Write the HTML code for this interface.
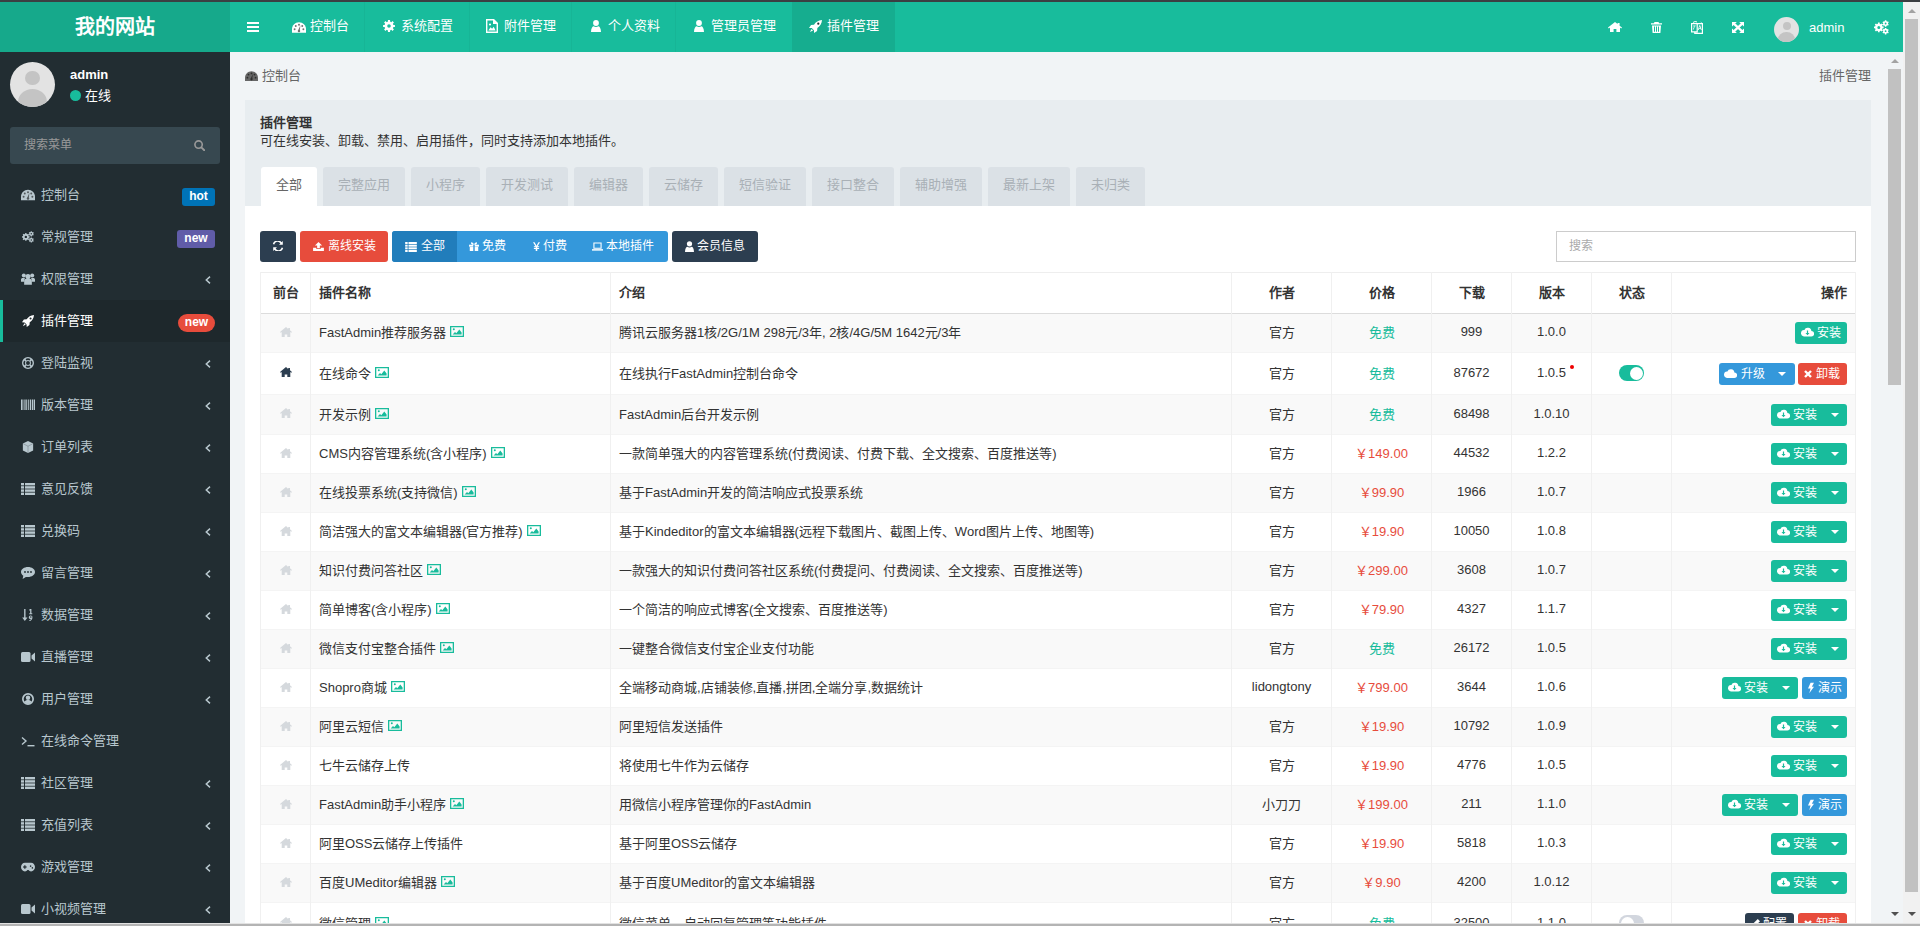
<!DOCTYPE html>
<html lang="zh-CN"><head><meta charset="utf-8">
<style>
*{box-sizing:border-box;margin:0;padding:0}
html,body{width:1920px;height:926px;overflow:hidden;background:#f1f4f6;font-family:"Liberation Sans",sans-serif;font-size:13px;color:#333}
.abs{position:absolute}
#topline{left:0;top:0;width:1920px;height:2px;background:#3b3f42}
#logo{left:0;top:2px;width:230px;height:50px;background:#16a98b;color:#fff;font-size:20px;font-weight:bold;text-align:center;line-height:50px}
#navbar{left:230px;top:2px;width:1673px;height:50px;background:#18bc9c}
#sidebar{left:0;top:52px;width:230px;height:871px;background:#222d32;overflow:hidden}
#content{left:230px;top:52px;width:1656px;height:871px;background:#f1f4f6;overflow:hidden}
#vs1{left:1886px;top:52px;width:17px;height:871px;background:#f1f4f6}
#vs2{left:1903px;top:2px;width:17px;height:921px;background:#f1f1f1}
#bot{left:0;top:923px;width:1920px;height:3px;background:#b4b4b4;border-top:1px solid #e2e2e2}
.thumb{position:absolute;background:#c1c1c1}
.arr-up{position:absolute;width:0;height:0;border-left:4px solid transparent;border-right:4px solid transparent;border-bottom:4px solid #a3a3a3}
.arr-dn{position:absolute;width:0;height:0;border-left:4px solid transparent;border-right:4px solid transparent;border-top:4px solid #505050}

.sb-user{position:absolute;left:0;top:0;width:230px;height:65px}
.avatar{position:absolute;border-radius:50%;background:#e3e3e3;overflow:hidden}
.avatar:before{content:"";position:absolute;left:34%;top:20%;width:32%;height:32%;border-radius:50%;background:#c4c4c4}
.avatar:after{content:"";position:absolute;left:17%;top:60%;width:66%;height:60%;border-radius:50%;background:#c4c4c4}
.sb-name{position:absolute;left:70px;top:15px;color:#fff;font-weight:bold;font-size:13px;line-height:16px}
.sb-stat{position:absolute;left:70px;top:37px;color:#fff;font-size:13px;line-height:13px}
.sb-dot{position:absolute;left:0;top:1px;width:11px;height:11px;border-radius:50%;background:#18bc9c}
.sb-search{position:absolute;left:10px;top:75px;width:210px;height:37px;border-radius:3px;background:#374850}
.sb-search span{position:absolute;left:14px;top:12px;font-size:12px;line-height:12px;color:#999}
.sb-search svg{position:absolute;left:184px;top:13px;width:11px;height:11px;color:#999}
.menu{position:absolute;left:0;top:122px;width:230px}
.mi{position:relative;height:42px;color:#b8c7ce}
.mi.act{background:#1e282c;color:#fff;border-left:3px solid #18bc9c}
.mi svg.ic{position:absolute;left:21px;top:15px;width:14px;height:12px}
.mi .tx{position:absolute;left:41px;top:14px;font-size:13px;line-height:14px}
.mi.act svg.ic{left:18px}
.mi.act .tx{left:38px}
.mi .chev{position:absolute;left:205px;top:18px;width:6px;height:8px}
.badge{position:absolute;left:182px;top:14px;height:18px;padding:0 6px;border-radius:3px;color:#fff;font-weight:bold;font-size:12px;line-height:16px;text-align:center}

.nv{position:absolute;color:#fff}
.nv-t{position:absolute;top:17px;font-size:13px;line-height:14px;color:#fff;white-space:nowrap}
.nv-i{position:absolute;color:#fff}
.nv-sep{position:absolute;top:0;width:1px;height:50px;background:rgba(0,0,0,.035)}

.ct{position:absolute;white-space:nowrap}
.panel{position:absolute;left:15px;top:48px;width:1626px;height:900px;background:#fff}
.ph{position:absolute;left:0;top:0;width:1626px;height:106px;background:#e8edf0}
.tab{position:absolute;top:67px;height:39px;border-radius:3px 3px 0 0;background:#dbe1e6;color:#a9b0b6;font-size:13px;line-height:36px;text-align:center}
.tab.on{background:#fff;color:#666}
.btn{position:absolute;height:31px;border-radius:3px;color:#fff;font-size:12px;line-height:31px;white-space:nowrap}
.btn svg{position:absolute}
.btn span{position:absolute;top:0}
.search{position:absolute;left:1311px;top:131px;width:300px;height:31px;border:1px solid #ccc;background:#fff}
.search span{position:absolute;left:12px;top:8px;font-size:12px;line-height:13px;color:#aaa}
.tbl{position:absolute;left:30px;top:220px;width:1595px;height:700px}
.hl{position:absolute;left:0;width:1595px;height:1px;background:#eee}
.vl{position:absolute;top:0;width:1px;height:700px;background:#f0f0f0}
.row{position:absolute;left:0;width:1595px}
.row.st{background:#f9f9f9}
.cell{position:absolute;top:0;height:100%;display:flex;align-items:center;padding-bottom:3px !important;white-space:nowrap;font-size:13px;color:#333}
.th{font-weight:bold}
.c{justify-content:center}
.r{justify-content:flex-end}
.free{color:#18bc9c}
.price{color:#e74c3c}
.ximg{width:14px;height:11px;color:#18bc9c;margin-left:4px;vertical-align:-1px}
.bx{position:absolute;height:22px;border-radius:3px;color:#fff;font-size:12px;line-height:22px;white-space:nowrap}
.bx svg{position:absolute}
.bx span{position:absolute;top:0}
</style></head><body>
<svg width="0" height="0" style="position:absolute">
<defs>
<symbol id="i-dash" viewBox="0 0 16 12"><path d="M8 0C3.6 0 0 3.6 0 8v4h16V8C16 3.6 12.4 0 8 0z" fill="currentColor"/><g fill="#000" opacity=".55"><circle cx="3" cy="8" r="1.1"/><circle cx="4.3" cy="4.3" r="1.1"/><circle cx="8" cy="2.8" r="1.1"/><circle cx="11.7" cy="4.3" r="1.1"/><circle cx="13" cy="8" r="1.1"/><path d="M9.6 3.5 8.9 9.3 7.1 9 z"/><circle cx="8" cy="10" r="1.4"/></g></symbol>
<symbol id="i-cog" viewBox="0 0 14 14"><path fill="currentColor" fill-rule="evenodd" d="M5.76 1.85 L5.77 0.11 L8.23 0.11 L8.24 1.85 L9.77 2.48 L11.00 1.26 L12.74 3.00 L11.52 4.23 L12.15 5.76 L13.89 5.77 L13.89 8.23 L12.15 8.24 L11.52 9.77 L12.74 11.00 L11.00 12.74 L9.77 11.52 L8.24 12.15 L8.23 13.89 L5.77 13.89 L5.76 12.15 L4.23 11.52 L3.00 12.74 L1.26 11.00 L2.48 9.77 L1.85 8.24 L0.11 8.23 L0.11 5.77 L1.85 5.76 L2.48 4.23 L1.26 3.00 L3.00 1.26 L4.23 2.48Z M9.10 7.00 A2.1 2.1 0 1 0 4.90 7.00 A2.1 2.1 0 1 0 9.10 7.00Z"/></symbol>
<symbol id="i-cogs" viewBox="0 0 15 15"><path fill="currentColor" fill-rule="evenodd" d="M3.91 3.70 L3.94 2.58 L5.66 2.58 L5.69 3.70 L6.79 4.16 L7.60 3.38 L8.82 4.60 L8.04 5.41 L8.50 6.51 L9.62 6.54 L9.62 8.26 L8.50 8.29 L8.04 9.39 L8.82 10.20 L7.60 11.42 L6.79 10.64 L5.69 11.10 L5.66 12.22 L3.94 12.22 L3.91 11.10 L2.81 10.64 L2.00 11.42 L0.78 10.20 L1.56 9.39 L1.10 8.29 L-0.02 8.26 L-0.02 6.54 L1.10 6.51 L1.56 5.41 L0.78 4.60 L2.00 3.38 L2.81 4.16Z M6.30 7.40 A1.5 1.5 0 1 0 3.30 7.40 A1.5 1.5 0 1 0 6.30 7.40Z M10.83 1.12 L10.88 0.28 L12.32 0.28 L12.37 1.12 L13.27 1.64 L14.03 1.27 L14.75 2.51 L14.05 2.98 L14.05 4.02 L14.75 4.49 L14.03 5.73 L13.27 5.36 L12.37 5.88 L12.32 6.72 L10.88 6.72 L10.83 5.88 L9.93 5.36 L9.17 5.73 L8.45 4.49 L9.15 4.02 L9.15 2.98 L8.45 2.51 L9.17 1.27 L9.93 1.64Z M12.50 3.50 A0.9 0.9 0 1 0 10.70 3.50 A0.9 0.9 0 1 0 12.50 3.50Z M10.83 8.82 L10.88 7.98 L12.32 7.98 L12.37 8.82 L13.27 9.34 L14.03 8.97 L14.75 10.21 L14.05 10.68 L14.05 11.72 L14.75 12.19 L14.03 13.43 L13.27 13.06 L12.37 13.58 L12.32 14.42 L10.88 14.42 L10.83 13.58 L9.93 13.06 L9.17 13.43 L8.45 12.19 L9.15 11.72 L9.15 10.68 L8.45 10.21 L9.17 8.97 L9.93 9.34Z M12.50 11.20 A0.9 0.9 0 1 0 10.70 11.20 A0.9 0.9 0 1 0 12.50 11.20Z"/></symbol>
<symbol id="i-users" viewBox="0 0 16 13"><g fill="currentColor"><circle cx="3.2" cy="2.6" r="2.3"/><circle cx="12.8" cy="2.6" r="2.3"/><path d="M0 9.5V7.2C0 6 .8 5.3 2 5.3h2.6c-.5.6-.8 1.4-.8 2.3v1.9z"/><path d="M16 9.5V7.2C16 6 15.2 5.3 14 5.3h-2.6c.5.6.8 1.4.8 2.3v1.9z"/><circle cx="8" cy="3.6" r="2.9"/><path d="M3.6 13V8.6c0-1.5 1-2.4 2.4-2.4h4c1.4 0 2.4.9 2.4 2.4V13z"/></g></symbol>
<symbol id="i-rocket" viewBox="0 0 14 14"><g fill="currentColor"><path d="M14 0C10 .2 7.4 2.2 5.4 5L2.2 5.3 0 8.5l3 .2 2.3 2.3.2 3 3.2-2.2.3-3.2C11.8 6.6 13.8 4 14 0z"/><path d="M2.8 9.6 1 13l3.4-1.8z"/></g><circle cx="10" cy="4" r="1.2" fill="#222d32"/></symbol>
<symbol id="i-life" viewBox="0 0 14 14"><path fill="currentColor" fill-rule="evenodd" d="M14 7A7 7 0 1 1 0 7A7 7 0 1 1 14 7Z M9.3 7A2.3 2.3 0 1 0 4.7 7A2.3 2.3 0 1 0 9.3 7Z M11.58 4.14A5.4 5.4 0 0 1 11.58 9.86L9.97 8.85A3.5 3.5 0 0 0 9.97 5.15ZM9.86 11.58A5.4 5.4 0 0 1 4.14 11.58L5.15 9.97A3.5 3.5 0 0 0 8.85 9.97ZM2.42 9.86A5.4 5.4 0 0 1 2.42 4.14L4.03 5.15A3.5 3.5 0 0 0 4.03 8.85ZM4.14 2.42A5.4 5.4 0 0 1 9.86 2.42L8.85 4.03A3.5 3.5 0 0 0 5.15 4.03Z"/></symbol>
<symbol id="i-barcode" viewBox="0 -0.5 14 12"><g fill="currentColor"><rect x="0" y="0" width="1.6" height="10.5"/><rect x="2.6" y="0" width="1" height="10.5"/><rect x="4.4" y="0" width="1.4" height="10.5"/><rect x="6.8" y="0" width="1" height="10.5"/><rect x="8.8" y="0" width="1.4" height="10.5"/><rect x="11" y="0" width="1" height="10.5"/><rect x="12.6" y="0" width="1.4" height="10.5"/></g></symbol>
<symbol id="i-cube" viewBox="0 0 14 14"><path fill="currentColor" d="M7 0 13 3v8l-6 3-6-3V3z"/><path d="M1.5 3.3 7 6l5.5-2.7M7 6v7.5" stroke="#222d32" stroke-width=".6" fill="none" opacity=".5"/></symbol>
<symbol id="i-list" viewBox="0 0 14 12"><g fill="currentColor"><rect x="0" y="0" width="3" height="2.4"/><rect x="4" y="0" width="10" height="2.4"/><rect x="0" y="3.2" width="3" height="2.4"/><rect x="4" y="3.2" width="10" height="2.4"/><rect x="0" y="6.4" width="3" height="2.4"/><rect x="4" y="6.4" width="10" height="2.4"/><rect x="0" y="9.6" width="3" height="2.4"/><rect x="4" y="9.6" width="10" height="2.4"/></g></symbol>
<symbol id="i-comment" viewBox="0 0 14 12"><path fill="currentColor" d="M7 0C3.1 0 0 2.2 0 5c0 1.5.9 2.8 2.3 3.7L1.6 12l3.3-2.1c.7.1 1.4.2 2.1.2 3.9 0 7-2.2 7-5S10.9 0 7 0z"/><g fill="#222d32"><circle cx="4" cy="5" r=".9"/><circle cx="7" cy="5" r=".9"/><circle cx="10" cy="5" r=".9"/></g></symbol>
<symbol id="i-sortnum" viewBox="0 0 14 14"><g fill="currentColor"><path d="M2.5 0h1.6v10h2.3L3.3 14 .2 10h2.3z"/><path d="M9.5 0h1.5v5H12v1H8.5V5h1V1.4L8.6 2 8.3 1z"/><path d="M10.3 7.5a1.9 1.9 0 0 1 1.9 2.1c0 2.3-1.4 4.2-3.6 4.4l-.2-1c1.1-.2 1.9-.8 2.2-1.7-.3.2-.6.3-1 .3a1.9 1.9 0 0 1 .7-4.1zm0 1a.9.9 0 1 0 0 1.8.9.9 0 1 0 0-1.8z" fill-rule="evenodd"/></g></symbol>
<symbol id="i-video" viewBox="0 0 14 10"><g fill="currentColor"><rect x="0" y="0" width="9.5" height="10" rx="1.5"/><path d="M10.5 3.5 14 .5v9l-3.5-3z"/></g></symbol>
<symbol id="i-usercirc" viewBox="0 0 14 14"><path fill="currentColor" fill-rule="evenodd" d="M14 7A7 7 0 1 1 0 7A7 7 0 1 1 14 7ZM12 7A5 5 0 1 0 2 7A5 5 0 1 0 12 7Z"/><circle cx="7" cy="5.5" r="2.6" fill="currentColor"/><path fill="currentColor" d="M2.8 10.6C3.6 8.9 5.1 8.2 7 8.2s3.4.7 4.2 2.4A5.2 5.2 0 0 1 2.8 10.6z"/></symbol>
<symbol id="i-term" viewBox="0 0 14 12"><path d="M1 2.5 5 6l-4 3.5" stroke="currentColor" stroke-width="1.4" fill="none"/><rect x="6.5" y="10" width="7" height="1.4" fill="currentColor"/></symbol>
<symbol id="i-gamepad" viewBox="0 0 16 10"><path fill="currentColor" d="M4.5 0h7C14 0 16 2.2 16 5s-2 5-4.5 5c-1.3 0-2.2-.6-2.9-1.5H7.4C6.7 9.4 5.8 10 4.5 10 2 10 0 7.8 0 5s2-5 4.5-5z"/><g fill="#222d32"><rect x="2.4" y="4.3" width="4" height="1.4"/><rect x="3.7" y="3" width="1.4" height="4"/><circle cx="11" cy="4" r=".9"/><circle cx="13" cy="6" r=".9"/></g></symbol>
<symbol id="i-search" viewBox="0 0 12 12"><path d="M5 1a4 4 0 1 0 0 8 4 4 0 1 0 0-8z" stroke="currentColor" stroke-width="1.8" fill="none"/><path d="M8 8l3.2 3.2" stroke="currentColor" stroke-width="2" stroke-linecap="round"/></symbol>
<symbol id="i-chev" viewBox="0 0 6 8"><path d="M5 .6 1.3 4 5 7.4" stroke="currentColor" stroke-width="1.5" fill="none"/></symbol>
<symbol id="i-bars" viewBox="0 0 12 10"><g fill="currentColor"><rect y="0" width="12" height="2"/><rect y="4" width="12" height="2"/><rect y="8" width="12" height="2"/></g></symbol>
<symbol id="i-fileimg" viewBox="0 0 12 14"><path fill="currentColor" fill-rule="evenodd" d="M0 0h8l4 4v10H0zM1.4 1.4v11.2h9.2V5H7V1.4z"/><path fill="currentColor" d="M2.3 11.5 4.6 8.2l1.5 1.6 1.6-2 1.9 3.7z"/><circle cx="4" cy="5.5" r="1.1" fill="currentColor"/></symbol>
<symbol id="i-user" viewBox="0 0 10 12"><g fill="currentColor"><circle cx="5" cy="3" r="2.9"/><path d="M0 12c0-3.8 1.6-5.8 2.7-5.8.6.5 1.4.8 2.3.8s1.7-.3 2.3-.8C8.4 6.2 10 8.2 10 12z"/></g></symbol>
<symbol id="i-home" viewBox="0 0 14 10"><path fill="currentColor" d="M7 0 0 5.6l.8.9L2 5.5V10h3.6V7h2.8v3H12V5.5l1.2 1 .8-.9L11.6 3.7V1h-2v1.1z"/></symbol>
<symbol id="i-trash" viewBox="0 0 11 11"><path fill="currentColor" fill-rule="evenodd" d="M3.5 0h4l.6 1.2H11v1.4H0V1.2h2.9zM1 3.4h9l-.6 7.6H1.6zM3 4.6v5.2h1V4.6zm2 0v5.2h1V4.6zm2 0v5.2h1V4.6z"/></symbol>
<symbol id="i-lang" viewBox="0 0 12 13"><path fill="none" stroke="currentColor" stroke-width="1.2" d="M.6 2.6h5.6v8.2H.6zM6.2 2.6h5.2v9.8H3.8v-1.6"/><path fill="currentColor" d="M2.2 4.5h2.5v.8H3.6c0 1.5-.5 2.6-1.3 3.4l-.5-.5c.6-.6 1-1.5 1-2.9H2.2z"/><path fill="currentColor" d="M8.3 4.2h.9l1.5 4.8h-.8l-.4-1.2H8.1L7.7 9h-.8zm.4 1-.5 1.9h1z"/><path fill="none" stroke="currentColor" stroke-width="1" d="M2 1.6C3.2.5 4.6.3 6 1M9.8 1.2 10.7 2"/></symbol>
<symbol id="i-expand" viewBox="0 0 12 11"><g fill="currentColor"><path d="M0 0h4.8L0 4.6z"/><path d="M12 0H7.2L12 4.6z"/><path d="M0 11h4.8L0 6.4z"/><path d="M12 11H7.2L12 6.4z"/></g><path d="M1.5 1.4 10.5 9.6M10.5 1.4 1.5 9.6" stroke="currentColor" stroke-width="2.3"/></symbol>
<symbol id="i-refresh" viewBox="0 0 12 10"><path fill="currentColor" d="M10.8 0v3.8H7l1.4-1.4A3.3 3.3 0 0 0 2.3 3.6L.8 3.1A4.9 4.9 0 0 1 9.5 1.3z"/><path fill="currentColor" d="M1.2 10V6.2H5L3.6 7.6a3.3 3.3 0 0 0 6.1-1.2l1.5.5a4.9 4.9 0 0 1-8.7 1.8z"/></symbol>
<symbol id="i-upload" viewBox="0 0 12 10"><g fill="currentColor"><path d="M6 0l4 4H7.5v3h-3V4H2z"/><path d="M0 6.5h3.6v1.3h4.8V6.5H12V10H0z"/></g></symbol>
<symbol id="i-gift" viewBox="0 0 11 10"><g fill="currentColor"><rect x="0" y="3" width="11" height="2.2"/><rect x=".8" y="5.6" width="9.4" height="4.4"/><path d="M5.5 3C4.8 1.2 3.6.2 2.7.4 1.6.7 2 2.5 3.6 3zM5.5 3C6.2 1.2 7.4.2 8.3.4 9.4.7 9 2.5 7.4 3z"/></g><rect x="4.7" y="3" width="1.6" height="7" fill="#3498db"/></symbol>
<symbol id="i-yen" viewBox="0 0 8 10"><path fill="currentColor" d="M0 0h1.8L4 4 6.2 0H8L5.2 4.8H7v1H4.9v1H7v1H4.9V10H3.1V7.8H1v-1h2.1v-1H1v-1h1.8z"/></symbol>
<symbol id="i-laptop" viewBox="0 0 12 9"><path fill="currentColor" fill-rule="evenodd" d="M1.5 0h9v7h-9zM2.7 1.2v4.6h6.6V1.2z"/><rect x="0" y="7.4" width="12" height="1.6" fill="currentColor"/></symbol>
<symbol id="i-cloudd" viewBox="0 0 13 9"><path fill="currentColor" d="M10.4 3.5A3.6 3.6 0 0 0 3.4 2.6 2.9 2.9 0 0 0 2.9 8.9h7.5a2.7 2.7 0 0 0 0-5.4z"/><path fill="#18bc9c" d="M5.9 3h1.2v2.6h1.4L6.5 7.7 4.5 5.6h1.4z"/></symbol>
<symbol id="i-cloud" viewBox="0 0 13 9"><path fill="currentColor" d="M10.4 3.5A3.6 3.6 0 0 0 3.4 2.6 2.9 2.9 0 0 0 2.9 8.9h7.5a2.7 2.7 0 0 0 0-5.4z"/></symbol>
<symbol id="i-times" viewBox="0 0 8 8"><path d="M1 1l6 6M7 1 1 7" stroke="currentColor" stroke-width="2.4"/></symbol>
<symbol id="i-caret" viewBox="0 0 8 4"><path fill="currentColor" d="M0 0h8L4 4z"/></symbol>
<symbol id="i-bolt" viewBox="0 0 7 12"><path fill="currentColor" d="M3 0h4L4.5 4.5H7L1.5 12 3 6.5H0z"/></symbol>
<symbol id="i-pencil" viewBox="0 0 10 10"><path fill="currentColor" d="M7.5 0 10 2.5 3.5 9 0 10l1-3.5z"/></symbol>
<symbol id="i-img" viewBox="0 0 14 11"><path fill="currentColor" fill-rule="evenodd" d="M0 0h14v11H0zM1.3 1.3v8.4h11.4V1.3z"/><path fill="currentColor" d="M2.6 8.6 5 6l1.3 1.2L9.3 3.6l2.3 2.8v2.2z"/><circle cx="3.8" cy="3.3" r="1" fill="currentColor"/></symbol>
<symbol id="i-homei" viewBox="0 0 12 10"><path fill="currentColor" d="M6 0 0 5l.7.8L1.7 5V10h3V7.5h2.6V10h3V5l1 .8.7-.8-2-1.7V1H8.2v1z"/></symbol>
</defs></svg>
<div id="topline" class="abs"></div>
<div id="logo" class="abs">我的网站</div>
<div id="navbar" class="abs"><svg class="nv-i" style="left:17px;top:20px;width:12px;height:10px"><use href="#i-bars"/></svg>

<div class="nv-sep" style="left:134px"></div>
<div class="nv-sep" style="left:239px"></div>
<div class="nv-sep" style="left:341px"></div>
<div class="nv-sep" style="left:445px"></div>
<div style="position:absolute;left:562px;top:0;width:103px;height:50px;background:rgba(0,0,0,.08)"></div>
<svg class="nv-i" style="left:62px;top:20px;width:14px;height:11px"><use href="#i-dash"/></svg><span class="nv-t" style="left:80px">控制台</span>
<svg class="nv-i" style="left:153px;top:18px;width:12px;height:12px"><use href="#i-cog"/></svg><span class="nv-t" style="left:171px">系统配置</span>
<svg class="nv-i" style="left:256px;top:17px;width:12px;height:14px"><use href="#i-fileimg"/></svg><span class="nv-t" style="left:274px">附件管理</span>
<svg class="nv-i" style="left:361px;top:18px;width:10px;height:12px"><use href="#i-user"/></svg><span class="nv-t" style="left:378px">个人资料</span>
<svg class="nv-i" style="left:464px;top:18px;width:10px;height:12px"><use href="#i-user"/></svg><span class="nv-t" style="left:481px">管理员管理</span>
<svg class="nv-i" style="left:579px;top:18px;width:13px;height:13px"><use href="#i-rocket"/></svg><span class="nv-t" style="left:597px">插件管理</span>
<svg class="nv-i" style="left:1378px;top:20px;width:14px;height:10px"><use href="#i-home"/></svg>
<svg class="nv-i" style="left:1421px;top:20px;width:11px;height:11px"><use href="#i-trash"/></svg>
<svg class="nv-i" style="left:1461px;top:19px;width:12px;height:13px"><use href="#i-lang"/></svg>
<svg class="nv-i" style="left:1502px;top:20px;width:12px;height:11px"><use href="#i-expand"/></svg>
<div class="avatar" style="left:1544px;top:15px;width:25px;height:25px"></div>
<span class="nv-t" style="left:1579px;top:19px;font-size:13px">admin</span>
<svg class="nv-i" style="left:1644px;top:18px;width:15px;height:15px"><use href="#i-cogs"/></svg>
</div>
<div id="sidebar" class="abs"><div class="sb-user"><div class="avatar" style="left:10px;top:10px;width:45px;height:45px"></div>
<div class="sb-name">admin</div><div class="sb-stat"><span class="sb-dot"></span><span style="position:absolute;left:15px;top:0;white-space:nowrap">在线</span></div></div>
<div class="sb-search"><span>搜索菜单</span><svg><use href="#i-search"/></svg></div>
<div class="menu"><div class="mi"><svg class="ic"><use href="#i-dash"/></svg><span class="tx">控制台</span><span class="badge" style="background:#0073b7;width:33px">hot</span></div>
<div class="mi"><svg class="ic"><use href="#i-cogs"/></svg><span class="tx">常规管理</span><span class="badge" style="background:#605ca8;left:177px;width:38px">new</span></div>
<div class="mi"><svg class="ic"><use href="#i-users"/></svg><span class="tx">权限管理</span><svg class="chev"><use href="#i-chev"/></svg></div>
<div class="mi act"><svg class="ic"><use href="#i-rocket"/></svg><span class="tx">插件管理</span><span class="badge" style="background:#e74c3c;left:175px;width:37px;border-radius:9px">new</span></div>
<div class="mi"><svg class="ic"><use href="#i-life"/></svg><span class="tx">登陆监视</span><svg class="chev"><use href="#i-chev"/></svg></div>
<div class="mi"><svg class="ic"><use href="#i-barcode"/></svg><span class="tx">版本管理</span><svg class="chev"><use href="#i-chev"/></svg></div>
<div class="mi"><svg class="ic"><use href="#i-cube"/></svg><span class="tx">订单列表</span><svg class="chev"><use href="#i-chev"/></svg></div>
<div class="mi"><svg class="ic"><use href="#i-list"/></svg><span class="tx">意见反馈</span><svg class="chev"><use href="#i-chev"/></svg></div>
<div class="mi"><svg class="ic"><use href="#i-list"/></svg><span class="tx">兑换码</span><svg class="chev"><use href="#i-chev"/></svg></div>
<div class="mi"><svg class="ic"><use href="#i-comment"/></svg><span class="tx">留言管理</span><svg class="chev"><use href="#i-chev"/></svg></div>
<div class="mi"><svg class="ic"><use href="#i-sortnum"/></svg><span class="tx">数据管理</span><svg class="chev"><use href="#i-chev"/></svg></div>
<div class="mi"><svg class="ic"><use href="#i-video"/></svg><span class="tx">直播管理</span><svg class="chev"><use href="#i-chev"/></svg></div>
<div class="mi"><svg class="ic"><use href="#i-usercirc"/></svg><span class="tx">用户管理</span><svg class="chev"><use href="#i-chev"/></svg></div>
<div class="mi"><svg class="ic"><use href="#i-term"/></svg><span class="tx">在线命令管理</span></div>
<div class="mi"><svg class="ic"><use href="#i-list"/></svg><span class="tx">社区管理</span><svg class="chev"><use href="#i-chev"/></svg></div>
<div class="mi"><svg class="ic"><use href="#i-list"/></svg><span class="tx">充值列表</span><svg class="chev"><use href="#i-chev"/></svg></div>
<div class="mi"><svg class="ic"><use href="#i-gamepad"/></svg><span class="tx">游戏管理</span><svg class="chev"><use href="#i-chev"/></svg></div>
<div class="mi"><svg class="ic"><use href="#i-video"/></svg><span class="tx">小视频管理</span><svg class="chev"><use href="#i-chev"/></svg></div></div></div>
<div id="content" class="abs"><svg class="ct" style="left:15px;top:19px;width:13px;height:10px;color:#666"><use href="#i-dash"/></svg><span class="ct" style="left:32px;top:17px;color:#666;font-size:13px;line-height:14px">控制台</span>
<span class="ct" style="left:1589px;top:17px;color:#666;font-size:13px;line-height:14px">插件管理</span>
<div class="panel"><div class="ph"><span class="ct" style="left:15px;top:16px;font-weight:bold;font-size:13px;line-height:14px;color:#333">插件管理</span><span class="ct" style="left:15px;top:34px;font-size:13px;line-height:14px;color:#333">可在线安装、卸载、禁用、启用插件，同时支持添加本地插件。</span>
<div class="tab on" style="left:16px;width:56px">全部</div>
<div class="tab" style="left:78px;width:82px">完整应用</div>
<div class="tab" style="left:166px;width:69px">小程序</div>
<div class="tab" style="left:241px;width:82px">开发测试</div>
<div class="tab" style="left:329px;width:69px">编辑器</div>
<div class="tab" style="left:404px;width:69px">云储存</div>
<div class="tab" style="left:479px;width:82px">短信验证</div>
<div class="tab" style="left:567px;width:82px">接口整合</div>
<div class="tab" style="left:655px;width:82px">辅助增强</div>
<div class="tab" style="left:743px;width:82px">最新上架</div>
<div class="tab" style="left:831px;width:69px">未归类</div>
</div>
<div class="btn" style="left:15px;top:131px;width:36px;background:#2c3e50"><svg style="left:12px;top:10px;width:12px;height:10px"><use href="#i-refresh"/></svg></div>
<div class="btn" style="left:55px;top:131px;width:88px;background:#e74c3c"><svg style="left:13px;top:11px;width:11px;height:9px"><use href="#i-upload"/></svg><span style="left:28px">离线安装</span></div>
<div class="btn" style="left:147px;top:131px;width:276px;background:#3498db"><div style="position:absolute;left:0;top:0;width:65px;height:31px;background:#217dbb;border-radius:3px 0 0 3px"></div><svg style="left:13px;top:11px;width:12px;height:10px"><use href="#i-list"/></svg><span style="left:29px">全部</span><svg style="left:77px;top:11px;width:10px;height:9px"><use href="#i-gift"/></svg><span style="left:90px">免费</span><svg style="left:141px;top:11px;width:7px;height:9px"><use href="#i-yen"/></svg><span style="left:151px">付费</span><svg style="left:200px;top:11px;width:11px;height:9px"><use href="#i-laptop"/></svg><span style="left:214px">本地插件</span></div>
<div class="btn" style="left:427px;top:131px;width:86px;background:#2c3e50"><svg style="left:13px;top:10px;width:9px;height:11px"><use href="#i-user"/></svg><span style="left:25px">会员信息</span></div>
<div class="search"><span>搜索</span></div><!--TBL--><div style="position:absolute;left:15px;top:172px;width:1595px;height:760px">
<div style="position:absolute;left:0;top:42px;width:1595px;height:38px;background:#f9f9f9"></div>
<div style="position:absolute;left:0;top:123px;width:1595px;height:39px;background:#f9f9f9"></div>
<div style="position:absolute;left:0;top:202px;width:1595px;height:38px;background:#f9f9f9"></div>
<div style="position:absolute;left:0;top:280px;width:1595px;height:38px;background:#f9f9f9"></div>
<div style="position:absolute;left:0;top:358px;width:1595px;height:38px;background:#f9f9f9"></div>
<div style="position:absolute;left:0;top:436px;width:1595px;height:38px;background:#f9f9f9"></div>
<div style="position:absolute;left:0;top:514px;width:1595px;height:38px;background:#f9f9f9"></div>
<div style="position:absolute;left:0;top:592px;width:1595px;height:38px;background:#f9f9f9"></div>
<div class="hl" style="top:0;background:#eee"></div>
<div class="hl" style="top:41px;height:1px;background:#dcdcdc"></div>
<div class="hl" style="top:80px;background:#f4f4f4"></div>
<div class="hl" style="top:122px;background:#f4f4f4"></div>
<div class="hl" style="top:162px;background:#f4f4f4"></div>
<div class="hl" style="top:201px;background:#f4f4f4"></div>
<div class="hl" style="top:240px;background:#f4f4f4"></div>
<div class="hl" style="top:279px;background:#f4f4f4"></div>
<div class="hl" style="top:318px;background:#f4f4f4"></div>
<div class="hl" style="top:357px;background:#f4f4f4"></div>
<div class="hl" style="top:396px;background:#f4f4f4"></div>
<div class="hl" style="top:435px;background:#f4f4f4"></div>
<div class="hl" style="top:474px;background:#f4f4f4"></div>
<div class="hl" style="top:513px;background:#f4f4f4"></div>
<div class="hl" style="top:552px;background:#f4f4f4"></div>
<div class="hl" style="top:591px;background:#f4f4f4"></div>
<div class="hl" style="top:630px;background:#f4f4f4"></div>
<div class="hl" style="top:672px;background:#f4f4f4"></div>
<div class="vl" style="left:0px"></div>
<div class="vl" style="left:50px"></div>
<div class="vl" style="left:350px"></div>
<div class="vl" style="left:971px"></div>
<div class="vl" style="left:1071px"></div>
<div class="vl" style="left:1171px"></div>
<div class="vl" style="left:1251px"></div>
<div class="vl" style="left:1331px"></div>
<div class="vl" style="left:1411px"></div>
<div class="vl" style="left:1595px"></div>
<div class="cell" style="left:1px;top:1px;width:49px;height:39px;justify-content:center;padding:0 8px;font-weight:bold;">前台</div>
<div class="cell" style="left:51px;top:1px;width:299px;height:39px;justify-content:flex-start;padding:0 8px;font-weight:bold;">插件名称</div>
<div class="cell" style="left:351px;top:1px;width:620px;height:39px;justify-content:flex-start;padding:0 8px;font-weight:bold;">介绍</div>
<div class="cell" style="left:972px;top:1px;width:99px;height:39px;justify-content:center;padding:0 8px;font-weight:bold;">作者</div>
<div class="cell" style="left:1072px;top:1px;width:99px;height:39px;justify-content:center;padding:0 8px;font-weight:bold;">价格</div>
<div class="cell" style="left:1172px;top:1px;width:79px;height:39px;justify-content:center;padding:0 8px;font-weight:bold;">下载</div>
<div class="cell" style="left:1252px;top:1px;width:79px;height:39px;justify-content:center;padding:0 8px;font-weight:bold;">版本</div>
<div class="cell" style="left:1332px;top:1px;width:79px;height:39px;justify-content:center;padding:0 8px;font-weight:bold;">状态</div>
<div class="cell" style="left:1412px;top:1px;width:183px;height:39px;justify-content:flex-end;padding:0 8px;font-weight:bold;">操作</div>
<div class="cell" style="left:1px;top:42px;width:49px;height:38px;justify-content:center;padding:0 8px;"><svg style="width:12px;height:10px;color:#d5d9dd"><use href="#i-homei"/></svg></div>
<div class="cell" style="left:51px;top:42px;width:299px;height:38px;justify-content:flex-start;padding:0 8px;"><span>FastAdmin推荐服务器</span><svg class="ximg"><use href="#i-img"/></svg></div>
<div class="cell" style="left:351px;top:42px;width:620px;height:38px;justify-content:flex-start;padding:0 8px;">腾讯云服务器1核/2G/1M 298元/3年, 2核/4G/5M 1642元/3年</div>
<div class="cell" style="left:972px;top:42px;width:99px;height:38px;justify-content:center;padding:0 8px;">官方</div>
<div class="cell" style="left:1072px;top:42px;width:99px;height:38px;justify-content:center;padding:0 8px;"><span class="free">免费</span></div>
<div class="cell" style="left:1172px;top:42px;width:79px;height:38px;justify-content:center;padding:0 8px;">999</div>
<div class="cell" style="left:1252px;top:42px;width:79px;height:38px;justify-content:center;padding:0 8px;">1.0.0</div>
<div class="bx" style="left:1535px;top:50px;width:52px;background:#18bc9c"><svg style="left:6px;top:5px;width:13px;height:10px"><use href="#i-cloudd"/></svg><span style="left:22px">安装</span></div>
<div class="cell" style="left:1px;top:81px;width:49px;height:41px;justify-content:center;padding:0 8px;"><svg style="width:12px;height:10px;color:#2c3e50"><use href="#i-homei"/></svg></div>
<div class="cell" style="left:51px;top:81px;width:299px;height:41px;justify-content:flex-start;padding:0 8px;"><span>在线命令</span><svg class="ximg"><use href="#i-img"/></svg></div>
<div class="cell" style="left:351px;top:81px;width:620px;height:41px;justify-content:flex-start;padding:0 8px;">在线执行FastAdmin控制台命令</div>
<div class="cell" style="left:972px;top:81px;width:99px;height:41px;justify-content:center;padding:0 8px;">官方</div>
<div class="cell" style="left:1072px;top:81px;width:99px;height:41px;justify-content:center;padding:0 8px;"><span class="free">免费</span></div>
<div class="cell" style="left:1172px;top:81px;width:79px;height:41px;justify-content:center;padding:0 8px;">87672</div>
<div class="cell" style="left:1252px;top:81px;width:79px;height:41px;justify-content:center;padding:0 8px;">1.0.5<span style="position:relative;display:inline-block;width:0"><span style="position:absolute;left:4px;top:-7px;width:4px;height:4px;border-radius:50%;background:#e00"></span></span></div>
<div class="cell" style="left:1332px;top:81px;width:79px;height:41px;justify-content:center;padding:0 8px;"><div style="position:relative;top:1px;width:25px;height:16px;border-radius:8px;background:#18bc9c"><div style="position:absolute;right:1.5px;top:1.5px;width:13px;height:13px;border-radius:50%;background:#fff"></div></div></div>
<div class="bx" style="left:1459px;top:91px;width:76px;background:#3498db"><svg style="left:5px;top:6px;width:13px;height:9px"><use href="#i-cloud"/></svg><span style="left:22px">升级</span><svg style="left:59px;top:9px;width:8px;height:4px"><use href="#i-caret"/></svg></div>
<div class="bx" style="left:1538px;top:91px;width:49px;background:#e74c3c"><svg style="left:6px;top:7px;width:8px;height:8px"><use href="#i-times"/></svg><span style="left:18px">卸载</span></div>
<div class="cell" style="left:1px;top:123px;width:49px;height:39px;justify-content:center;padding:0 8px;"><svg style="width:12px;height:10px;color:#d5d9dd"><use href="#i-homei"/></svg></div>
<div class="cell" style="left:51px;top:123px;width:299px;height:39px;justify-content:flex-start;padding:0 8px;"><span>开发示例</span><svg class="ximg"><use href="#i-img"/></svg></div>
<div class="cell" style="left:351px;top:123px;width:620px;height:39px;justify-content:flex-start;padding:0 8px;">FastAdmin后台开发示例</div>
<div class="cell" style="left:972px;top:123px;width:99px;height:39px;justify-content:center;padding:0 8px;">官方</div>
<div class="cell" style="left:1072px;top:123px;width:99px;height:39px;justify-content:center;padding:0 8px;"><span class="free">免费</span></div>
<div class="cell" style="left:1172px;top:123px;width:79px;height:39px;justify-content:center;padding:0 8px;">68498</div>
<div class="cell" style="left:1252px;top:123px;width:79px;height:39px;justify-content:center;padding:0 8px;">1.0.10</div>
<div class="bx" style="left:1511px;top:132px;width:76px;background:#18bc9c"><svg style="left:6px;top:5px;width:13px;height:10px"><use href="#i-cloudd"/></svg><span style="left:22px">安装</span><svg style="left:60px;top:9px;width:8px;height:4px"><use href="#i-caret"/></svg></div>
<div class="cell" style="left:1px;top:163px;width:49px;height:38px;justify-content:center;padding:0 8px;"><svg style="width:12px;height:10px;color:#d5d9dd"><use href="#i-homei"/></svg></div>
<div class="cell" style="left:51px;top:163px;width:299px;height:38px;justify-content:flex-start;padding:0 8px;"><span>CMS内容管理系统(含小程序)</span><svg class="ximg"><use href="#i-img"/></svg></div>
<div class="cell" style="left:351px;top:163px;width:620px;height:38px;justify-content:flex-start;padding:0 8px;">一款简单强大的内容管理系统(付费阅读、付费下载、全文搜索、百度推送等)</div>
<div class="cell" style="left:972px;top:163px;width:99px;height:38px;justify-content:center;padding:0 8px;">官方</div>
<div class="cell" style="left:1072px;top:163px;width:99px;height:38px;justify-content:center;padding:0 8px;"><span class="price">￥149.00</span></div>
<div class="cell" style="left:1172px;top:163px;width:79px;height:38px;justify-content:center;padding:0 8px;">44532</div>
<div class="cell" style="left:1252px;top:163px;width:79px;height:38px;justify-content:center;padding:0 8px;">1.2.2</div>
<div class="bx" style="left:1511px;top:171px;width:76px;background:#18bc9c"><svg style="left:6px;top:5px;width:13px;height:10px"><use href="#i-cloudd"/></svg><span style="left:22px">安装</span><svg style="left:60px;top:9px;width:8px;height:4px"><use href="#i-caret"/></svg></div>
<div class="cell" style="left:1px;top:202px;width:49px;height:38px;justify-content:center;padding:0 8px;"><svg style="width:12px;height:10px;color:#d5d9dd"><use href="#i-homei"/></svg></div>
<div class="cell" style="left:51px;top:202px;width:299px;height:38px;justify-content:flex-start;padding:0 8px;"><span>在线投票系统(支持微信)</span><svg class="ximg"><use href="#i-img"/></svg></div>
<div class="cell" style="left:351px;top:202px;width:620px;height:38px;justify-content:flex-start;padding:0 8px;">基于FastAdmin开发的简洁响应式投票系统</div>
<div class="cell" style="left:972px;top:202px;width:99px;height:38px;justify-content:center;padding:0 8px;">官方</div>
<div class="cell" style="left:1072px;top:202px;width:99px;height:38px;justify-content:center;padding:0 8px;"><span class="price">￥99.90</span></div>
<div class="cell" style="left:1172px;top:202px;width:79px;height:38px;justify-content:center;padding:0 8px;">1966</div>
<div class="cell" style="left:1252px;top:202px;width:79px;height:38px;justify-content:center;padding:0 8px;">1.0.7</div>
<div class="bx" style="left:1511px;top:210px;width:76px;background:#18bc9c"><svg style="left:6px;top:5px;width:13px;height:10px"><use href="#i-cloudd"/></svg><span style="left:22px">安装</span><svg style="left:60px;top:9px;width:8px;height:4px"><use href="#i-caret"/></svg></div>
<div class="cell" style="left:1px;top:241px;width:49px;height:38px;justify-content:center;padding:0 8px;"><svg style="width:12px;height:10px;color:#d5d9dd"><use href="#i-homei"/></svg></div>
<div class="cell" style="left:51px;top:241px;width:299px;height:38px;justify-content:flex-start;padding:0 8px;"><span>简洁强大的富文本编辑器(官方推荐)</span><svg class="ximg"><use href="#i-img"/></svg></div>
<div class="cell" style="left:351px;top:241px;width:620px;height:38px;justify-content:flex-start;padding:0 8px;">基于Kindeditor的富文本编辑器(远程下载图片、截图上传、Word图片上传、地图等)</div>
<div class="cell" style="left:972px;top:241px;width:99px;height:38px;justify-content:center;padding:0 8px;">官方</div>
<div class="cell" style="left:1072px;top:241px;width:99px;height:38px;justify-content:center;padding:0 8px;"><span class="price">￥19.90</span></div>
<div class="cell" style="left:1172px;top:241px;width:79px;height:38px;justify-content:center;padding:0 8px;">10050</div>
<div class="cell" style="left:1252px;top:241px;width:79px;height:38px;justify-content:center;padding:0 8px;">1.0.8</div>
<div class="bx" style="left:1511px;top:249px;width:76px;background:#18bc9c"><svg style="left:6px;top:5px;width:13px;height:10px"><use href="#i-cloudd"/></svg><span style="left:22px">安装</span><svg style="left:60px;top:9px;width:8px;height:4px"><use href="#i-caret"/></svg></div>
<div class="cell" style="left:1px;top:280px;width:49px;height:38px;justify-content:center;padding:0 8px;"><svg style="width:12px;height:10px;color:#d5d9dd"><use href="#i-homei"/></svg></div>
<div class="cell" style="left:51px;top:280px;width:299px;height:38px;justify-content:flex-start;padding:0 8px;"><span>知识付费问答社区</span><svg class="ximg"><use href="#i-img"/></svg></div>
<div class="cell" style="left:351px;top:280px;width:620px;height:38px;justify-content:flex-start;padding:0 8px;">一款强大的知识付费问答社区系统(付费提问、付费阅读、全文搜索、百度推送等)</div>
<div class="cell" style="left:972px;top:280px;width:99px;height:38px;justify-content:center;padding:0 8px;">官方</div>
<div class="cell" style="left:1072px;top:280px;width:99px;height:38px;justify-content:center;padding:0 8px;"><span class="price">￥299.00</span></div>
<div class="cell" style="left:1172px;top:280px;width:79px;height:38px;justify-content:center;padding:0 8px;">3608</div>
<div class="cell" style="left:1252px;top:280px;width:79px;height:38px;justify-content:center;padding:0 8px;">1.0.7</div>
<div class="bx" style="left:1511px;top:288px;width:76px;background:#18bc9c"><svg style="left:6px;top:5px;width:13px;height:10px"><use href="#i-cloudd"/></svg><span style="left:22px">安装</span><svg style="left:60px;top:9px;width:8px;height:4px"><use href="#i-caret"/></svg></div>
<div class="cell" style="left:1px;top:319px;width:49px;height:38px;justify-content:center;padding:0 8px;"><svg style="width:12px;height:10px;color:#d5d9dd"><use href="#i-homei"/></svg></div>
<div class="cell" style="left:51px;top:319px;width:299px;height:38px;justify-content:flex-start;padding:0 8px;"><span>简单博客(含小程序)</span><svg class="ximg"><use href="#i-img"/></svg></div>
<div class="cell" style="left:351px;top:319px;width:620px;height:38px;justify-content:flex-start;padding:0 8px;">一个简洁的响应式博客(全文搜索、百度推送等)</div>
<div class="cell" style="left:972px;top:319px;width:99px;height:38px;justify-content:center;padding:0 8px;">官方</div>
<div class="cell" style="left:1072px;top:319px;width:99px;height:38px;justify-content:center;padding:0 8px;"><span class="price">￥79.90</span></div>
<div class="cell" style="left:1172px;top:319px;width:79px;height:38px;justify-content:center;padding:0 8px;">4327</div>
<div class="cell" style="left:1252px;top:319px;width:79px;height:38px;justify-content:center;padding:0 8px;">1.1.7</div>
<div class="bx" style="left:1511px;top:327px;width:76px;background:#18bc9c"><svg style="left:6px;top:5px;width:13px;height:10px"><use href="#i-cloudd"/></svg><span style="left:22px">安装</span><svg style="left:60px;top:9px;width:8px;height:4px"><use href="#i-caret"/></svg></div>
<div class="cell" style="left:1px;top:358px;width:49px;height:38px;justify-content:center;padding:0 8px;"><svg style="width:12px;height:10px;color:#d5d9dd"><use href="#i-homei"/></svg></div>
<div class="cell" style="left:51px;top:358px;width:299px;height:38px;justify-content:flex-start;padding:0 8px;"><span>微信支付宝整合插件</span><svg class="ximg"><use href="#i-img"/></svg></div>
<div class="cell" style="left:351px;top:358px;width:620px;height:38px;justify-content:flex-start;padding:0 8px;">一键整合微信支付宝企业支付功能</div>
<div class="cell" style="left:972px;top:358px;width:99px;height:38px;justify-content:center;padding:0 8px;">官方</div>
<div class="cell" style="left:1072px;top:358px;width:99px;height:38px;justify-content:center;padding:0 8px;"><span class="free">免费</span></div>
<div class="cell" style="left:1172px;top:358px;width:79px;height:38px;justify-content:center;padding:0 8px;">26172</div>
<div class="cell" style="left:1252px;top:358px;width:79px;height:38px;justify-content:center;padding:0 8px;">1.0.5</div>
<div class="bx" style="left:1511px;top:366px;width:76px;background:#18bc9c"><svg style="left:6px;top:5px;width:13px;height:10px"><use href="#i-cloudd"/></svg><span style="left:22px">安装</span><svg style="left:60px;top:9px;width:8px;height:4px"><use href="#i-caret"/></svg></div>
<div class="cell" style="left:1px;top:397px;width:49px;height:38px;justify-content:center;padding:0 8px;"><svg style="width:12px;height:10px;color:#d5d9dd"><use href="#i-homei"/></svg></div>
<div class="cell" style="left:51px;top:397px;width:299px;height:38px;justify-content:flex-start;padding:0 8px;"><span>Shopro商城</span><svg class="ximg"><use href="#i-img"/></svg></div>
<div class="cell" style="left:351px;top:397px;width:620px;height:38px;justify-content:flex-start;padding:0 8px;">全端移动商城,店铺装修,直播,拼团,全端分享,数据统计</div>
<div class="cell" style="left:972px;top:397px;width:99px;height:38px;justify-content:center;padding:0 8px;">lidongtony</div>
<div class="cell" style="left:1072px;top:397px;width:99px;height:38px;justify-content:center;padding:0 8px;"><span class="price">￥799.00</span></div>
<div class="cell" style="left:1172px;top:397px;width:79px;height:38px;justify-content:center;padding:0 8px;">3644</div>
<div class="cell" style="left:1252px;top:397px;width:79px;height:38px;justify-content:center;padding:0 8px;">1.0.6</div>
<div class="bx" style="left:1462px;top:405px;width:76px;background:#18bc9c"><svg style="left:6px;top:5px;width:13px;height:10px"><use href="#i-cloudd"/></svg><span style="left:22px">安装</span><svg style="left:60px;top:9px;width:8px;height:4px"><use href="#i-caret"/></svg></div>
<div class="bx" style="left:1542px;top:405px;width:45px;background:#3498db"><svg style="left:6px;top:5px;width:6px;height:12px"><use href="#i-bolt"/></svg><span style="left:16px">演示</span></div>
<div class="cell" style="left:1px;top:436px;width:49px;height:38px;justify-content:center;padding:0 8px;"><svg style="width:12px;height:10px;color:#d5d9dd"><use href="#i-homei"/></svg></div>
<div class="cell" style="left:51px;top:436px;width:299px;height:38px;justify-content:flex-start;padding:0 8px;"><span>阿里云短信</span><svg class="ximg"><use href="#i-img"/></svg></div>
<div class="cell" style="left:351px;top:436px;width:620px;height:38px;justify-content:flex-start;padding:0 8px;">阿里短信发送插件</div>
<div class="cell" style="left:972px;top:436px;width:99px;height:38px;justify-content:center;padding:0 8px;">官方</div>
<div class="cell" style="left:1072px;top:436px;width:99px;height:38px;justify-content:center;padding:0 8px;"><span class="price">￥19.90</span></div>
<div class="cell" style="left:1172px;top:436px;width:79px;height:38px;justify-content:center;padding:0 8px;">10792</div>
<div class="cell" style="left:1252px;top:436px;width:79px;height:38px;justify-content:center;padding:0 8px;">1.0.9</div>
<div class="bx" style="left:1511px;top:444px;width:76px;background:#18bc9c"><svg style="left:6px;top:5px;width:13px;height:10px"><use href="#i-cloudd"/></svg><span style="left:22px">安装</span><svg style="left:60px;top:9px;width:8px;height:4px"><use href="#i-caret"/></svg></div>
<div class="cell" style="left:1px;top:475px;width:49px;height:38px;justify-content:center;padding:0 8px;"><svg style="width:12px;height:10px;color:#d5d9dd"><use href="#i-homei"/></svg></div>
<div class="cell" style="left:51px;top:475px;width:299px;height:38px;justify-content:flex-start;padding:0 8px;"><span>七牛云储存上传</span></div>
<div class="cell" style="left:351px;top:475px;width:620px;height:38px;justify-content:flex-start;padding:0 8px;">将使用七牛作为云储存</div>
<div class="cell" style="left:972px;top:475px;width:99px;height:38px;justify-content:center;padding:0 8px;">官方</div>
<div class="cell" style="left:1072px;top:475px;width:99px;height:38px;justify-content:center;padding:0 8px;"><span class="price">￥19.90</span></div>
<div class="cell" style="left:1172px;top:475px;width:79px;height:38px;justify-content:center;padding:0 8px;">4776</div>
<div class="cell" style="left:1252px;top:475px;width:79px;height:38px;justify-content:center;padding:0 8px;">1.0.5</div>
<div class="bx" style="left:1511px;top:483px;width:76px;background:#18bc9c"><svg style="left:6px;top:5px;width:13px;height:10px"><use href="#i-cloudd"/></svg><span style="left:22px">安装</span><svg style="left:60px;top:9px;width:8px;height:4px"><use href="#i-caret"/></svg></div>
<div class="cell" style="left:1px;top:514px;width:49px;height:38px;justify-content:center;padding:0 8px;"><svg style="width:12px;height:10px;color:#d5d9dd"><use href="#i-homei"/></svg></div>
<div class="cell" style="left:51px;top:514px;width:299px;height:38px;justify-content:flex-start;padding:0 8px;"><span>FastAdmin助手小程序</span><svg class="ximg"><use href="#i-img"/></svg></div>
<div class="cell" style="left:351px;top:514px;width:620px;height:38px;justify-content:flex-start;padding:0 8px;">用微信小程序管理你的FastAdmin</div>
<div class="cell" style="left:972px;top:514px;width:99px;height:38px;justify-content:center;padding:0 8px;">小刀刀</div>
<div class="cell" style="left:1072px;top:514px;width:99px;height:38px;justify-content:center;padding:0 8px;"><span class="price">￥199.00</span></div>
<div class="cell" style="left:1172px;top:514px;width:79px;height:38px;justify-content:center;padding:0 8px;">211</div>
<div class="cell" style="left:1252px;top:514px;width:79px;height:38px;justify-content:center;padding:0 8px;">1.1.0</div>
<div class="bx" style="left:1462px;top:522px;width:76px;background:#18bc9c"><svg style="left:6px;top:5px;width:13px;height:10px"><use href="#i-cloudd"/></svg><span style="left:22px">安装</span><svg style="left:60px;top:9px;width:8px;height:4px"><use href="#i-caret"/></svg></div>
<div class="bx" style="left:1542px;top:522px;width:45px;background:#3498db"><svg style="left:6px;top:5px;width:6px;height:12px"><use href="#i-bolt"/></svg><span style="left:16px">演示</span></div>
<div class="cell" style="left:1px;top:553px;width:49px;height:38px;justify-content:center;padding:0 8px;"><svg style="width:12px;height:10px;color:#d5d9dd"><use href="#i-homei"/></svg></div>
<div class="cell" style="left:51px;top:553px;width:299px;height:38px;justify-content:flex-start;padding:0 8px;"><span>阿里OSS云储存上传插件</span></div>
<div class="cell" style="left:351px;top:553px;width:620px;height:38px;justify-content:flex-start;padding:0 8px;">基于阿里OSS云储存</div>
<div class="cell" style="left:972px;top:553px;width:99px;height:38px;justify-content:center;padding:0 8px;">官方</div>
<div class="cell" style="left:1072px;top:553px;width:99px;height:38px;justify-content:center;padding:0 8px;"><span class="price">￥19.90</span></div>
<div class="cell" style="left:1172px;top:553px;width:79px;height:38px;justify-content:center;padding:0 8px;">5818</div>
<div class="cell" style="left:1252px;top:553px;width:79px;height:38px;justify-content:center;padding:0 8px;">1.0.3</div>
<div class="bx" style="left:1511px;top:561px;width:76px;background:#18bc9c"><svg style="left:6px;top:5px;width:13px;height:10px"><use href="#i-cloudd"/></svg><span style="left:22px">安装</span><svg style="left:60px;top:9px;width:8px;height:4px"><use href="#i-caret"/></svg></div>
<div class="cell" style="left:1px;top:592px;width:49px;height:38px;justify-content:center;padding:0 8px;"><svg style="width:12px;height:10px;color:#d5d9dd"><use href="#i-homei"/></svg></div>
<div class="cell" style="left:51px;top:592px;width:299px;height:38px;justify-content:flex-start;padding:0 8px;"><span>百度UMeditor编辑器</span><svg class="ximg"><use href="#i-img"/></svg></div>
<div class="cell" style="left:351px;top:592px;width:620px;height:38px;justify-content:flex-start;padding:0 8px;">基于百度UMeditor的富文本编辑器</div>
<div class="cell" style="left:972px;top:592px;width:99px;height:38px;justify-content:center;padding:0 8px;">官方</div>
<div class="cell" style="left:1072px;top:592px;width:99px;height:38px;justify-content:center;padding:0 8px;"><span class="price">￥9.90</span></div>
<div class="cell" style="left:1172px;top:592px;width:79px;height:38px;justify-content:center;padding:0 8px;">4200</div>
<div class="cell" style="left:1252px;top:592px;width:79px;height:38px;justify-content:center;padding:0 8px;">1.0.12</div>
<div class="bx" style="left:1511px;top:600px;width:76px;background:#18bc9c"><svg style="left:6px;top:5px;width:13px;height:10px"><use href="#i-cloudd"/></svg><span style="left:22px">安装</span><svg style="left:60px;top:9px;width:8px;height:4px"><use href="#i-caret"/></svg></div>
<div class="cell" style="left:1px;top:631px;width:49px;height:41px;justify-content:center;padding:0 8px;"><svg style="width:12px;height:10px;color:#d5d9dd"><use href="#i-homei"/></svg></div>
<div class="cell" style="left:51px;top:631px;width:299px;height:41px;justify-content:flex-start;padding:0 8px;"><span>微信管理</span><svg class="ximg"><use href="#i-img"/></svg></div>
<div class="cell" style="left:351px;top:631px;width:620px;height:41px;justify-content:flex-start;padding:0 8px;">微信菜单、自动回复管理等功能插件</div>
<div class="cell" style="left:972px;top:631px;width:99px;height:41px;justify-content:center;padding:0 8px;">官方</div>
<div class="cell" style="left:1072px;top:631px;width:99px;height:41px;justify-content:center;padding:0 8px;"><span class="free">免费</span></div>
<div class="cell" style="left:1172px;top:631px;width:79px;height:41px;justify-content:center;padding:0 8px;">32500</div>
<div class="cell" style="left:1252px;top:631px;width:79px;height:41px;justify-content:center;padding:0 8px;">1.1.0</div>
<div class="cell" style="left:1332px;top:631px;width:79px;height:41px;justify-content:center;padding:0 8px;"><div style="position:relative;top:1px;width:25px;height:16px;border-radius:8px;background:#d2d6de"><div style="position:absolute;left:1.5px;top:1.5px;width:13px;height:13px;border-radius:50%;background:#fff"></div></div></div>
<div class="bx" style="left:1485px;top:641px;width:49px;background:#2c3e50"><svg style="left:6px;top:6px;width:9px;height:9px"><use href="#i-pencil"/></svg><span style="left:18px">配置</span></div>
<div class="bx" style="left:1538px;top:641px;width:49px;background:#e74c3c"><svg style="left:6px;top:7px;width:8px;height:8px"><use href="#i-times"/></svg><span style="left:18px">卸载</span></div>
</div><!--/TBL--></div></div>
<div id="vs1" class="abs">
  <div class="arr-up" style="left:5px;top:7px"></div>
  <div class="thumb" style="left:2px;top:17px;width:13px;height:316px"></div>
  <div class="arr-dn" style="left:5px;top:860px"></div>
</div>
<div id="vs2" class="abs">
  <div class="arr-up" style="left:5px;top:7px"></div>
  <div class="thumb" style="left:2px;top:17px;width:13px;height:873px"></div>
  <div class="arr-dn" style="left:5px;top:910px"></div>
</div>
<div id="bot" class="abs"></div>
</body></html>
